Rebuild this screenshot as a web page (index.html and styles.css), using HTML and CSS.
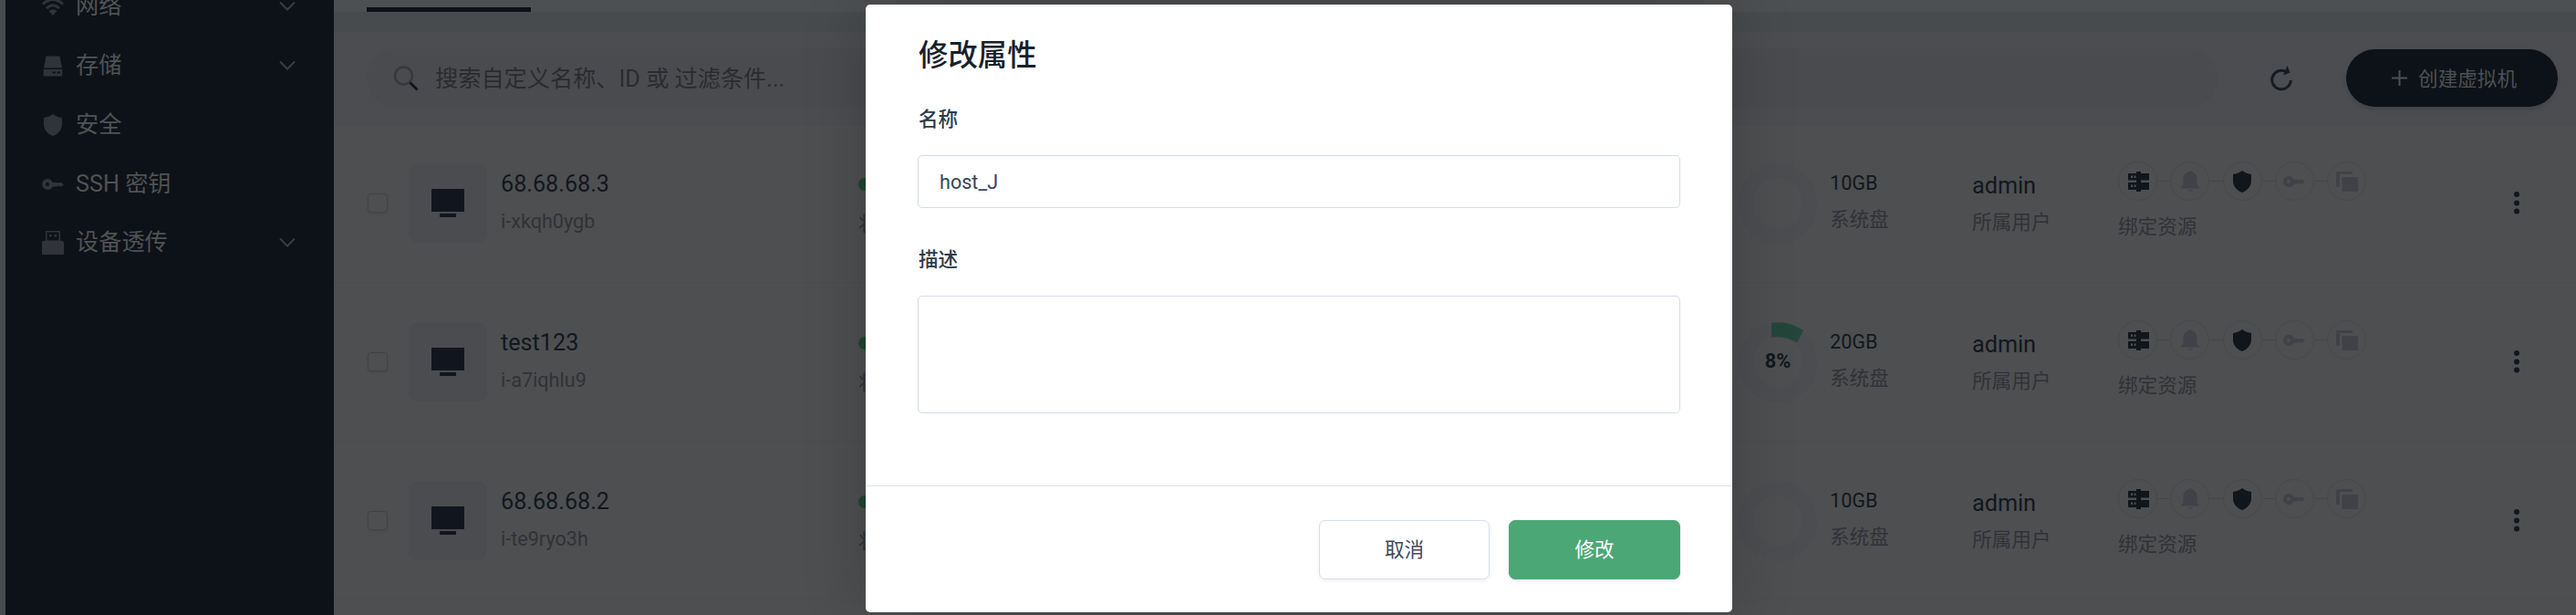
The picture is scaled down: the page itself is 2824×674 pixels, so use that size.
FILE: index.html
```html
<!DOCTYPE html>
<html lang="zh-CN">
<head>
<meta charset="utf-8">
<title>修改属性</title>
<link rel="stylesheet" href="styles.css">
</head>
<body>
<svg class="defs" aria-hidden="true">
  <symbol id="wifi" viewBox="0 0 24 24"><path fill="none" stroke="currentColor" stroke-width="3" d="M1 9.500Q12-.5 23 9.500M5 14q7-6.500 14 0"/><path d="M12 22l-4.500-5q4.500-3.500 9 0z"/></symbol>
  <symbol id="disk" viewBox="0 0 24 24"><path d="M4.500 1.500h15L22 14.500H2zM1.700 16h20.600v7.500H1.700zM11.500 18.500v2h3.500v-2zm5 0v2H20v-2z" fill-rule="evenodd"/></symbol>
  <symbol id="shield" viewBox="0 0 24 24"><path d="M12 0c3 2.500 6.500 3.500 10 4v7c0 6-3.500 10.500-10 13C5.500 21.500 2 17 2 11V4c3.500-.5 7-1.500 10-4z"/></symbol>
  <symbol id="key" viewBox="0 0 24 24"><path fill-rule="evenodd" d="M6 6a6 6 0 0 1 5.700 4H21l3 2.200-3 2.300h-1.500L18 13.500l-1.800 1H11.700A6 6 0 1 1 6 6zm0 4a2 2 0 1 0 0 4 2 2 0 0 0 0-4z"/></symbol>
  <symbol id="usb" viewBox="0 0 24 26"><path fill-rule="evenodd" d="M4 0h16v11h2a2 2 0 0 1 2 2v13H0V13a2 2 0 0 1 2-2h2zm1.500 1.500v9h13v-9zM8 4h2.600v2.500H8zm5.400 0H16v2.500h-2.600z"/></symbol>
  <symbol id="server" viewBox="0 0 24 24"><path fill-rule="evenodd" d="M1 3h9V1h5v2h9v7.500h-9v2.500h9v8h-9v2h-5v-2H1v-8h9v-2.500H1zm3 2.500v2.500h2v-2.500zm3.500 0v2.500h2v-2.500zM4 15.500V18h2v-2.500zm3.500 0V18h2v-2.500z"/></symbol>
  <symbol id="bell" viewBox="0 0 24 24"><path d="M12 0a2 2 0 0 1 2 1.500c3.500 1 5.500 4 5.500 7.500v6.500l3 4H1.500l3-4V9c0-3.500 2-6.500 5.500-7.500A2 2 0 0 1 12 0zM9 21h6q-3 3.500-6 0z"/></symbol>
  <symbol id="copy" viewBox="0 0 24 24"><path d="M0 1h18v3H4v14H0zM6.500 7H24v16H6.500z"/></symbol>
  <symbol id="chevron" viewBox="0 0 18 12"><path fill="none" stroke="currentColor" stroke-width="2" d="M1 1.500l8 8 8-8"/></symbol>
</svg>
<div class="app">
  <nav class="sidebar">
    <a class="item"><svg class="nav-icon"><use href="#wifi"/></svg><span class="label">网络</span><svg class="chevron"><use href="#chevron"/></svg></a>
    <a class="item"><svg class="nav-icon"><use href="#disk"/></svg><span class="label">存储</span><svg class="chevron"><use href="#chevron"/></svg></a>
    <a class="item"><svg class="nav-icon"><use href="#shield"/></svg><span class="label">安全</span></a>
    <a class="item"><svg class="nav-icon"><use href="#key"/></svg><span class="label">SSH 密钥</span></a>
    <a class="item"><svg class="nav-icon usb"><use href="#usb"/></svg><span class="label">设备透传</span><svg class="chevron"><use href="#chevron"/></svg></a>
  </nav>
  <main class="main">
    <div class="tabs"><span class="tab-line"></span></div>
    <div class="toolbar">
      <div class="search">
        <svg class="search-icon" viewBox="0 0 28 28"><circle cx="11.500" cy="11" r="9.500" fill="none" stroke="#36393c" stroke-width="2.500"/><path d="M18.500 18.500l8 8" stroke="#10151f" stroke-width="3"/></svg>
        <span class="placeholder">搜索自定义名称、ID 或 过滤条件...</span>
      </div>
      <svg class="refresh" viewBox="0 0 24 28"><path fill="none" stroke="currentColor" stroke-width="3" d="M17 6.500A10.300 10.300 0 1 0 22.300 16"/><path d="M18.500 0l3 7.500-7.500 3z"/></svg>
      <div class="create"><svg class="plus" viewBox="0 0 17 17"><path d="M8.500 0v17M0 8.500h17" stroke="currentColor" stroke-width="2"/></svg><span class="create-text">创建虚拟机</span></div>
    </div>
    <div class="rows" id="rows">
    </div>
  </main>
</div>
<div class="modal">
  <div class="modal-body">
    <h1 class="title">修改属性</h1>
    <label class="field-label">名称</label>
    <div class="input">host_J</div>
    <label class="field-label second">描述</label>
    <div class="textarea"></div>
  </div>
  <div class="modal-footer">
    <button class="btn">取消</button>
    <button class="btn primary">修改</button>
  </div>
</div>
<script src="rows.js"></script>
</body>
</html>
```
FILE: rows.js
```js
const machines = [
  { name: "68.68.68.3", id: "i-xkqh0ygb", disk: "10GB" },
  { name: "test123", id: "i-a7iqhlu9", disk: "20GB", used: 8 },
  { name: "68.68.68.2", id: "i-te9ryo3h", disk: "10GB" }
];
const resources = [["server", true], ["bell", false], ["shield", true], ["key", false], ["copy", false]];

document.getElementById("rows").innerHTML = machines.map(m => `
  <div class="row">
    <span class="checkbox"></span>
    <div class="tile"><svg class="monitor" viewBox="0 0 36 31"><path d="M0 0h36v25H0zM9 27h18v4H9z"/></svg></div>
    <div class="cell host"><div class="name">${m.name}</div><div class="sub">${m.id}</div></div>
    <div class="cell status"><span class="dot"></span><div class="sub">状态</div></div>
    <div class="ring">
      <svg class="ring-svg" viewBox="0 0 86 88"><ellipse cx="43" cy="44" rx="35" ry="36" fill="none" stroke="#4c4d50" stroke-width="16"/>${m.used ? '<path d="M36 .5h10q11 0 25 8.500l-7 13.500q-10-6-19-6h-9z" fill="#24463a"/>' : ""}</svg>
      ${m.used ? `<b class="percent">${m.used}%</b>` : ""}
    </div>
    <div class="cell disk"><div class="size">${m.disk}</div><div class="sub">系统盘</div></div>
    <div class="cell owner"><div class="name">admin</div><div class="sub">所属用户</div></div>
    <div class="cell binding">
      <div class="chain">${resources.map(([icon, on]) => `<span class="node${on ? " on" : ""}"><svg class="node-icon"><use href="#${icon}"/></svg></span>`).join('<i class="link"></i>')}</div>
      <div class="sub">绑定资源</div>
    </div>
    <svg class="more" viewBox="0 0 6 26"><circle cx="3" cy="3" r="3"/><circle cx="3" cy="12.500" r="3"/><circle cx="3" cy="21.500" r="3"/></svg>
  </div>`).join("");
```
FILE: styles.css
```css
* { box-sizing: border-box; }
body {
  margin: 0;
  width: 2824px;
  height: 674px;
  overflow: hidden;
  position: relative;
  background: #474b4d;
  font-family: Roboto, "Noto Sans CJK SC", sans-serif;
  font-size: 25.2px;
  color: #12171f;
}
svg { fill: currentColor; flex: none; display: block; }
.defs { display: none; }
.app { display: flex; height: 674px; padding-left: 6px; }
.sidebar { width: 360px; flex: none; background: #0d1218; overflow: hidden; }
.item { display: flex; align-items: center; height: 65px; padding: 0 42px 0 40px; color: #505254; }
.item:first-child { margin-top: -26px; }
.nav-icon { width: 24px; height: 24px; margin-right: 13px; color: #303337; }
.nav-icon.usb { height: 26px; }
.item:last-child { margin-top: -1px; }
.label { flex: 1; line-height: 36px; }
.chevron { width: 18px; height: 12px; color: #3a3c40; }
.main { flex: 1; min-width: 0; display: flex; flex-direction: column; }
.tabs { height: 13px; background: #4e4f50; padding: 8px 0 0 36px; margin-bottom: 22px; flex: none; }
.tab-line { display: block; width: 180px; height: 5px; background: #0d1219; }
.toolbar { height: 102px; flex: none; background: #4c4d50; display: flex; align-items: center; padding: 0 20px 0 36px; border-bottom: 1px solid #4b4c4e; }
.search { width: 2030px; height: 65px; border-radius: 33px; background: #4a4b4e; display: flex; align-items: center; padding-left: 29px; color: #2a2b2d; }
.search-icon { width: 28px; height: 28px; margin-right: 18px; }
.placeholder, .create-text { padding-bottom: 3px; }
.refresh { width: 24px; height: 28px; margin-left: 58px; color: #151b23; }
.create { width: 232px; height: 63px; margin-left: 59px; border-radius: 32px; background: #0d1218; color: #4e5052; display: flex; align-items: center; padding-left: 50px; font-size: 21.6px; box-shadow: 0 3px 5px rgba(0,0,0,.12); }
.plus { width: 17px; height: 17px; margin-right: 12px; }
.rows { background: #4e4f50; flex: 1; }
.row { height: 174px; margin-top: -1px; margin-bottom: 1px; border-bottom: 1px solid #4b4c4d; display: flex; align-items: flex-start; padding: 43px 0 0 37px; }
.checkbox { width: 22px; height: 21px; margin-top: 33px; border: 1px solid #424347; border-radius: 4px; box-shadow: 0 1px 3px rgba(0,0,0,.1); }
.tile { width: 86px; height: 87px; margin-left: 23px; border-radius: 11px; background: #4b4c50; padding: 28px 0 0 25px; }
.monitor { width: 36px; height: 31px; color: #11161e; }
.cell { white-space: nowrap; }
.name { line-height: 36px; }
.size { font-size: 21.6px; line-height: 32px; }
.sub { font-size: 21.6px; line-height: 32px; color: #303238; }
.host { margin-left: 15px; width: 392px; padding-top: 5px; }
.host .sub { margin-top: 7px; }
.status { width: 965px; padding-top: 16px; }
.dot { display: block; width: 14px; height: 14px; border-radius: 50%; background: #1f4530; margin-bottom: 21px; }
.ring { width: 86px; height: 88px; position: relative; }
.ring-svg { width: 86px; height: 88px; }
.percent { position: absolute; inset: 0; line-height: 85px; text-align: center; font-size: 21.6px; }
.disk { margin-left: 14px; width: 156px; padding-top: 6px; }
.disk .sub { margin-top: 8px; }
.owner { width: 160px; padding-top: 7px; }
.owner .sub { margin-top: 6px; }
.binding { width: 434px; }
.chain { display: flex; align-items: center; margin-top: -2px; }
.node { width: 43px; height: 43px; border: 1px solid #48494b; border-radius: 50%; display: flex; align-items: center; justify-content: center; color: #404248; }
.node.on { color: #11161c; }
.node-icon { width: 24px; height: 24px; }
.link { width: 14.300px; height: 1px; background: #454649; }
.binding .sub { margin-top: 13px; }
.more { width: 6px; height: 26px; margin-top: 31px; }
.modal { position: absolute; left: 949px; top: 5px; width: 950px; height: 666px; border-radius: 5px; background: #fff; box-shadow: 0 0 70px rgba(0,0,0,.2); color: #2c3a4b; display: flex; flex-direction: column; }
.modal-body { height: 527px; padding: 32px 57px 0 57px; }
.title { margin: 0; font-size: 32.400px; line-height: 48px; font-weight: 500; color: #17212b; padding-left: 1px; }
.field-label { display: block; margin-top: 30px; font-size: 21.600px; line-height: 32px; font-weight: 500; padding-left: 1px; }
.input { height: 58px; margin-top: 23px; border: 1px solid #d5dce8; border-radius: 5px; padding-left: 23px; font-size: 21.600px; line-height: 57px; color: #3a4559; }
.field-label.second { margin-top: 41px; }
.textarea { height: 129px; margin-top: 23px; border: 1px solid #d5dce8; border-radius: 5px; }
.modal-footer { flex: 1; border-top: 1px solid #d9e1ec; display: flex; justify-content: flex-end; gap: 21px; padding: 37px 57px 0 0; }
.btn { width: 187px; height: 65px; border: 1px solid #d6dee8; border-radius: 7px; background: #fff; color: #3f4a5c; font: 400 21.600px/60px Roboto, "Noto Sans CJK SC", sans-serif; padding: 0; box-shadow: 0 2px 4px rgba(30,50,80,.07); }
.btn.primary { width: 188px; background: #4ca777; border-color: #4ca777; color: #fff; }
```
